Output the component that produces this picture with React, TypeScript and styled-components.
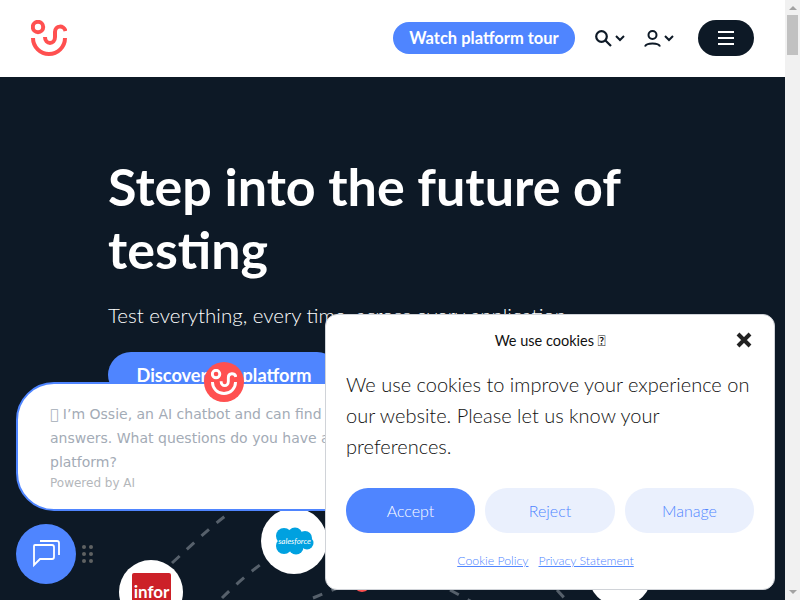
import React from "react";
import styled, { createGlobalStyle } from "styled-components";

const GlobalStyle = createGlobalStyle`
  html, body {
    margin: 0;
    padding: 0;
    background: #ffffff;
    font-family: "Lato", "Liberation Sans", sans-serif;
  }
  * { box-sizing: border-box; }
`;

const Page = styled.div`
  display: flex;
  height: 600px;
  overflow: hidden;
  background: #ffffff;
`;

const Main = styled.main`
  flex: 1;
  min-width: 0;
`;

const ScrollTrack = styled.div`
  display: flex;
  flex-direction: column;
  align-items: center;
  width: 15px;
  padding-top: 6px;
  background: #f1f1f1;
`;

const ScrollArrow = styled.div<{ $down?: boolean }>`
  width: 0;
  height: 0;
  border-left: 4px solid transparent;
  border-right: 4px solid transparent;
  border-top: ${({ $down }) => ($down ? "4px solid #a3a3a3" : "none")};
  border-bottom: ${({ $down }) => ($down ? "none" : "4px solid #a3a3a3")};
  margin-top: ${({ $down }) => ($down ? "auto" : "0")};
  margin-bottom: ${({ $down }) => ($down ? "6px" : "0")};
`;

const ScrollThumb = styled.div`
  width: 11px;
  height: 40px;
  margin-top: 5px;
  background: #c1c1c1;
`;

const Header = styled.header`
  display: flex;
  align-items: center;
  justify-content: space-between;
  height: 77px;
  padding: 0 31px 1px 31px;
  background: #ffffff;
`;

const HeaderActions = styled.div`
  display: flex;
  align-items: center;
`;

const TourButton = styled.a`
  display: flex;
  align-items: center;
  justify-content: center;
  width: 182px;
  height: 32px;
  margin-right: 20px;
  border-radius: 16px;
  background: #4f85ff;
  color: #ffffff;
  font-size: 16.5px;
  font-weight: 700;
`;

const IconButton = styled.button`
  display: flex;
  align-items: center;
  gap: 3px;
  padding: 0;
  margin-right: 19px;
  border: none;
  background: none;
  color: #0d1926;
`;

const MenuButton = styled.button`
  display: flex;
  align-items: center;
  justify-content: center;
  width: 56px;
  height: 36px;
  margin-left: 5px;
  padding: 0;
  border: none;
  border-radius: 18px;
  background: #0d1926;
`;

const Hero = styled.section`
  position: relative;
  height: 523px;
  padding: 78px 108px 0;
  background: #0d1926;
  overflow: hidden;
`;

const Title = styled.h1`
  position: relative;
  margin: 0;
  max-width: 560px;
  color: #ffffff;
  font-size: 52px;
  font-weight: 700;
  line-height: 63px;
`;

const Lead = styled.p`
  position: relative;
  margin: 19px 0 0;
  color: #ffffff;
  font-size: 20.5px;
  font-weight: 300;
  line-height: 30px;
  white-space: nowrap;
`;

const Discover = styled.a`
  position: relative;
  display: inline-flex;
  align-items: center;
  justify-content: center;
  width: 232px;
  height: 46px;
  margin-top: 22px;
  border-radius: 23px;
  background: #4f85ff;
  color: #ffffff;
  font-size: 18.2px;
  font-weight: 700;
`;

const Network = styled.svg`
  position: absolute;
  top: 0;
  left: 0;
  width: 785px;
  height: 523px;
`;

const ChatBubble = styled.div`
  position: fixed;
  left: 16px;
  top: 382px;
  width: 420px;
  height: 129px;
  padding: 18px 32px 0;
  border: 2px solid #4f85ff;
  border-radius: 38px;
  background: #ffffff;
  font-family: "DejaVu Sans", sans-serif;
`;

const ChatText = styled.p`
  width: 345px;
  margin: 0;
  color: #a3abb6;
  font-size: 14px;
  line-height: 24px;
`;

const PoweredBy = styled.div`
  margin-top: 2px;
  color: #b4b7bb;
  font-size: 12px;
  line-height: 14px;
`;

const Avatar = styled.div`
  position: fixed;
  left: 204px;
  top: 362px;
  display: flex;
  align-items: center;
  justify-content: center;
  width: 40px;
  height: 40px;
  border-radius: 50%;
  background: #ff5050;
`;

const ChatLauncher = styled.button`
  position: fixed;
  left: 16px;
  top: 524px;
  display: flex;
  align-items: center;
  justify-content: center;
  width: 60px;
  height: 60px;
  padding: 0;
  border: none;
  border-radius: 50%;
  background: #4f85ff;
`;

const DragHandle = styled.div`
  position: fixed;
  left: 82px;
  top: 545px;
  display: grid;
  grid-template-columns: repeat(2, 4px);
  gap: 3px;
  span {
    width: 4px;
    height: 4px;
    border-radius: 50%;
    background: #5f6263;
  }
`;

const CookieCard = styled.div`
  position: fixed;
  right: 25px;
  bottom: 10px;
  width: 450px;
  height: 276px;
  padding: 0 20px;
  border: 1px solid #d0d3d8;
  border-radius: 12px;
  background: #ffffff;
  color: #111111;
`;

const CookieHead = styled.div`
  display: flex;
  align-items: center;
  justify-content: center;
  height: 50px;
  font-size: 14.5px;
  font-weight: 400;
`;

const CloseButton = styled.button`
  position: absolute;
  top: 17px;
  right: 22px;
  display: flex;
  padding: 0;
  border: none;
  background: none;
`;

const CookieBody = styled.p`
  margin: 4px 0 0;
  font-size: 20px;
  font-weight: 300;
  line-height: 31px;
`;

const CookieButtons = styled.div`
  display: grid;
  grid-template-columns: 129px 130px 129px;
  gap: 10px;
  margin-top: 26px;
`;

const CookieButton = styled.button<{ $primary?: boolean }>`
  height: 45px;
  padding: 0;
  border: none;
  border-radius: 22px;
  background: ${({ $primary }) => ($primary ? "#4f85ff" : "#eaf0fd")};
  color: ${({ $primary }) => ($primary ? "#ffffff" : "#4f85ff")};
  font-family: inherit;
  font-size: 16px;
  font-weight: 300;
`;

const CookieLinks = styled.div`
  display: flex;
  justify-content: center;
  gap: 10px;
  margin-top: 20px;
  padding-right: 9px;
  a {
    color: #4f85ff;
    font-size: 12.3px;
    font-weight: 300;
    text-decoration: underline;
  }
`;

const Logo = ({ size, color }: { size: number; color: string }) => (
  <svg width={size} height={size} viewBox="0 0 36 36" fill="none" stroke={color} strokeWidth="4">
    <circle cx="7" cy="7" r="5.2" />
    <path d="M2 18a16 16 0 0 0 32 0" />
    <path d="M14 17c0 8 10 8 10 0v-5c0-7 9-7 10.500-1" />
  </svg>
);

const Chevron = () => (
  <svg width="10" height="7" viewBox="0 0 10 7" fill="none" stroke="#0d1926" strokeWidth="2">
    <path d="M1 1l4 4 4-4" />
  </svg>
);

const App: React.FC = () => {
  return (
    <Page>
      <GlobalStyle />
      <Main>
        <Header>
          <Logo size={36} color="#ff5050" />
          <HeaderActions>
            <TourButton>Watch platform tour</TourButton>
            <IconButton aria-label="Search">
              <svg width="17" height="17" viewBox="0 0 17 17" fill="none" stroke="#0d1926" strokeWidth="2.2">
                <circle cx="6.500" cy="6.500" r="5.300" />
                <path d="M10.500 10.500l5.500 5.500" />
              </svg>
              <Chevron />
            </IconButton>
            <IconButton aria-label="Account">
              <svg width="17" height="17" viewBox="0 0 17 17" fill="none" stroke="#0d1926" strokeWidth="2">
                <circle cx="8.500" cy="5" r="4" />
                <path d="M1 16.500c1.500-4 13.500-4 15 0" />
              </svg>
              <Chevron />
            </IconButton>
            <MenuButton aria-label="Menu">
              <svg width="16" height="14" viewBox="0 0 16 14" stroke="#ffffff" strokeWidth="2">
                <path d="M0 1h16M0 7h16M0 13h16" />
              </svg>
            </MenuButton>
          </HeaderActions>
        </Header>
        <Hero>
          <Network viewBox="0 0 785 523" fill="none">
            <g stroke="#56606b" strokeWidth="3" strokeDasharray="10 10">
              <path d="M172 486C195 465 210 450 232 434" />
              <path d="M222 521C235 508 250 495 264 485" />
              <path d="M313 521L340 510" />
              <path d="M450 513L472 525" />
              <path d="M557 513L568 525" />
            </g>
            <circle cx="294" cy="464" r="33" fill="#ffffff" />
            <circle cx="151" cy="515" r="32" fill="#ffffff" />
            <circle cx="362" cy="506" r="9" fill="#ff5050" />
            <circle cx="620" cy="497" r="32" fill="#ffffff" />
            <rect x="132" y="496" width="39" height="40" rx="2" fill="#cc2128" />
            <text x="151.500" y="521" textAnchor="middle" fill="#ffffff" fontSize="17" fontWeight="700" fontFamily="Lato, sans-serif">infor</text>
            <g fill="#00a1e0">
              <circle cx="284" cy="459" r="8" />
              <circle cx="295" cy="458" r="7.500" />
              <circle cx="305" cy="461" r="7" />
              <circle cx="307" cy="466" r="6.500" />
              <circle cx="296" cy="470" r="7.500" />
              <circle cx="284" cy="469" r="8" />
            </g>
            <text x="294.500" y="467" textAnchor="middle" fill="#ffffff" fontSize="8" fontStyle="italic" fontFamily="Lato, sans-serif">salesforce</text>
          </Network>
          <Title>Step into the future of testing</Title>
          <Lead>Test everything, every time, across every application.</Lead>
          <Discover>Discover the platform</Discover>
        </Hero>

        <ChatBubble>
          <ChatText>{"\uE000"} I’m Ossie, an AI chatbot and can find you answers. What questions do you have about our platform?</ChatText>
          <PoweredBy>Powered by AI</PoweredBy>
        </ChatBubble>
        <Avatar>
          <Logo size={26} color="#ffffff" />
        </Avatar>
        <ChatLauncher aria-label="Open chat">
          <svg width="30" height="30" viewBox="0 0 30 30" fill="none" stroke="#ffffff" strokeWidth="1.800">
            <path d="M4 6h17a2 2 0 0 1 2 2v10a2 2 0 0 1-2 2H9l-6 6V7a1 1 0 0 1 1-1z" />
            <path d="M9 2h17a2 2 0 0 1 2 2v12" />
          </svg>
        </ChatLauncher>
        <DragHandle>
          {[0, 1, 2, 3, 4, 5].map((dot) => (
            <span key={dot} />
          ))}
        </DragHandle>

        <CookieCard>
          <CookieHead>We use cookies {"\uE000"}</CookieHead>
          <CloseButton aria-label="Close">
            <svg width="16" height="16" viewBox="0 0 16 16" stroke="#222222" strokeWidth="4">
              <path d="M2 2l12 12M14 2L2 14" />
            </svg>
          </CloseButton>
          <CookieBody>We use cookies to improve your experience on our website. Please let us know your preferences.</CookieBody>
          <CookieButtons>
            <CookieButton $primary>Accept</CookieButton>
            <CookieButton>Reject</CookieButton>
            <CookieButton>Manage</CookieButton>
          </CookieButtons>
          <CookieLinks>
            <a>Cookie Policy</a>
            <a>Privacy Statement</a>
          </CookieLinks>
        </CookieCard>
      </Main>
      <ScrollTrack>
        <ScrollArrow />
        <ScrollThumb />
        <ScrollArrow $down />
      </ScrollTrack>
    </Page>
  );
};

export default App;
